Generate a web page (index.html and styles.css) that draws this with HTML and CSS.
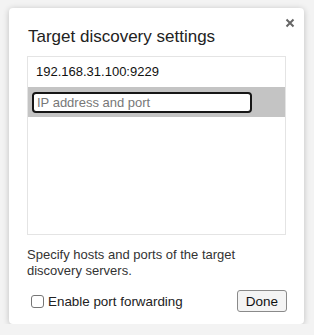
FILE: index.html
```html
<!DOCTYPE html>
<html lang="en">
<head>
    <meta charset="UTF-8">
    <title>Target discovery settings</title>
    <link rel="stylesheet" href="styles.css">
</head>
<body>
    <div class="dialog">
        <span class="close">
            <svg width="10" height="10" viewBox="0 0 10 10"><path d="M1.5 1.5L8.5 8.5M8.5 1.5L1.5 8.5" stroke="#666" stroke-width="2"/></svg>
        </span>
        <div class="title">Target discovery settings</div>
        <div class="list">
            <div class="row">192.168.31.100:9229</div>
            <div class="row editing">
                <input type="text" class="edit" placeholder="IP address and port">
            </div>
        </div>
        <div class="help">Specify hosts and ports of the target discovery servers.</div>
        <div class="footer">
            <label class="check"><span class="box"></span>Enable port forwarding</label>
            <button class="done">Done</button>
        </div>
    </div>
</body>
</html>
```

FILE: styles.css
```css
* {
    margin: 0;
    padding: 0;
    box-sizing: border-box;
}
body {
    background: #f3f3f3;
    font-family: "Liberation Sans", Arial, sans-serif;
    font-size: 13px;
    color: #222;
    padding: 8px 0 0 9px;
}
.dialog {
    position: relative;
    width: 295px;
    background: #fff;
    border-radius: 4px;
    box-shadow: 0 1px 6px rgba(0, 0, 0, 0.22);
    padding: 19px 18px 12px 18px;
}
.close {
    position: absolute;
    top: 10px;
    right: 9px;
    width: 10px;
    height: 10px;
    display: block;
}
.close svg {
    display: block;
}
.title {
    font-size: 17px;
    line-height: 20px;
    color: #222;
    padding-left: 1px;
}
.list {
    margin-top: 9px;
    height: 179px;
    border: 1px solid #e4e4e4;
}
.row {
    height: 30px;
    line-height: 30px;
    padding-left: 8px;
    color: #111;
}
.row.editing {
    background: #c4c4c4;
    padding: 5px 0 0 4px;
}
.edit {
    display: block;
    width: 220px;
    height: 21px;
    border: 2px solid #161616;
    border-radius: 4px;
    padding: 0 3px;
    font-family: inherit;
    font-size: 13px;
    outline: none;
    background: #fff;
}
.edit::placeholder {
    color: #777;
}
.help {
    margin-top: 12px;
    line-height: 16px;
    color: #333;
}
.footer {
    margin-top: 11px;
    display: flex;
    align-items: center;
    justify-content: space-between;
}
.check {
    display: flex;
    align-items: center;
    padding-left: 4px;
    color: #222;
    font-size: 13.4px;
}
.box {
    width: 13px;
    height: 13px;
    border: 1px solid #767676;
    border-radius: 3px;
    margin-right: 4px;
    background: #fff;
}
.done {
    width: 50px;
    height: 22px;
    border: 1px solid #8a8a8a;
    border-radius: 3px;
    background: #f4f4f4;
    font-family: inherit;
    font-size: 13.5px;
    color: #111;
    margin-right: -1px;
}
```
